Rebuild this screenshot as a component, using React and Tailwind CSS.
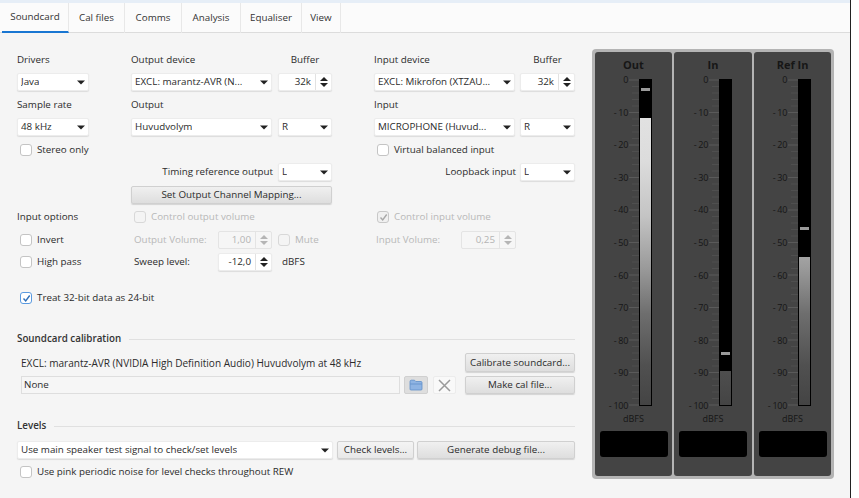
import React from "react";

const COLS = "grid grid-cols-[114px_147px_96px_146px_55px] h-[18px] items-center";

function Caret() {
  return (
    <svg width="8" height="5" viewBox="0 0 8 5" className="shrink-0">
      <path d="M0 0.5H8L4 4.5Z" fill="#222" />
    </svg>
  );
}

function Select({ children, w }) {
  return (
    <div
      className="h-[18px] bg-white rounded-[2px] border border-[#ececec] flex items-center justify-between pl-[3px] pr-[3px] shadow-[0_1px_1px_#dcdcdc]"
      style={{ width: w }}
    >
      <span className="truncate">{children}</span>
      <span className="ml-[2px] flex"><Caret /></span>
    </div>
  );
}

function Spinner({ value, w, disabled }) {
  return (
    <div
      className={`h-[18px] rounded-[2px] border flex items-center ${disabled ? "bg-[#f6f6f6] border-[#e4e4e4] text-[#b4b4b4]" : "bg-white border-[#ececec] shadow-[0_1px_1px_#dcdcdc]"}`}
      style={{ width: w }}
    >
      <span className="flex-1 text-right pr-[4px]">{value}</span>
      <span className={`w-[16px] h-full border-l flex flex-col items-center justify-center gap-[2px] ${disabled ? "border-[#e4e4e4]" : "border-[#e2e2e2]"}`}>
        <svg width="8" height="4" viewBox="0 0 8 4"><path d="M0 4H8L4 0Z" fill={disabled ? "#b5b5b5" : "#222"} /></svg>
        <svg width="8" height="4" viewBox="0 0 8 4"><path d="M0 0H8L4 4Z" fill={disabled ? "#b5b5b5" : "#222"} /></svg>
      </span>
    </div>
  );
}

function Check({ label, checked, disabled, className = "" }) {
  const box = checked
    ? disabled
      ? "border-[#c8c8c8] bg-[#f0f0f0]"
      : "border-[#5a9ae0] bg-white"
    : disabled
      ? "border-[#d8d8d8] bg-[#f4f4f4]"
      : "border-[#c4c4c4] bg-white";
  return (
    <div className={`flex items-center gap-[5px] whitespace-nowrap ${disabled ? "text-[#b8b8b8]" : ""} ${className}`}>
      <span className={`w-[12px] h-[12px] ml-[3px] rounded-[3px] border flex items-center justify-center ${box}`}>
        {checked && (
          <svg width="9" height="9" viewBox="0 0 9 9">
            <path d="M1.5 4.5L3.7 7L7.7 1.5" fill="none" stroke={disabled ? "#a8a8a8" : "#2f6fb8"} strokeWidth="1.4" />
          </svg>
        )}
      </span>
      <span>{label}</span>
    </div>
  );
}

function Btn({ children, className = "" }) {
  return (
    <div className={`h-[18px] rounded-[2px] border border-[#d0d0d0] bg-gradient-to-b from-[#f0f0f0] to-[#dedede] flex items-center justify-center whitespace-nowrap shadow-[0_1px_1px_#d4d4d4] ${className}`}>
      {children}
    </div>
  );
}

function Heading({ children }) {
  return (
    <div className="h-[18px] flex items-center gap-[8px] w-[558px]">
      <span className="font-semibold text-[#333] whitespace-nowrap">{children}</span>
      <span className="flex-1 h-px bg-[#e0e0e0]" />
    </div>
  );
}

const LABELS = ["0", "- 10", "- 20", "- 30", "- 40", "- 50", "- 60", "- 70", "- 80", "- 90", "- 100"];
const FILL = "linear-gradient(#e6e6e6 0%, #dcdcdc 25%, #c4c4c4 42%, #9a9a9a 58%, #6e6e6e 72%, #505050 88%, #444444 100%)";

function Meter({ title, level, peak, offset, className = "" }) {
  const ticks = [];
  for (let i = 0; i <= 50; i++) {
    const y = 6 + i * 6.5;
    ticks.push(
      <line key={i} x1={i % 5 === 0 ? 0 : 3} x2="10" y1={y} y2={y} stroke={i % 5 === 0 ? "#5a5a5a" : "#4f4f4f"} strokeWidth="1" />
    );
  }
  return (
    <div className={`h-full bg-[#444444] rounded-[3px] flex flex-col items-center ${className}`}>
      <div className="h-[22px] flex items-center font-bold text-[11px] text-[#161616] pt-[4px]">{title}</div>
      <div className="flex h-[338px] self-start" style={{ marginLeft: offset }}>
        <div className="w-[33px] flex flex-col justify-between items-end text-[9px] leading-[12px] tracking-[-0.3px] text-[#161616]">
          {LABELS.map((l) => <span key={l} className="h-[12px] whitespace-nowrap">{l}</span>)}
        </div>
        <svg width="10" height="338" viewBox="0 0 10 338" className="ml-[1px]">{ticks}</svg>
        <div className="relative w-[13px] h-[327px] mt-[5px] bg-black border-x border-b border-black flex flex-col justify-end overflow-hidden">
          <div
            className="w-full"
            style={{ height: level, background: FILL, backgroundSize: "100% 326px", backgroundPosition: "bottom", backgroundRepeat: "no-repeat" }}
          />
          <div className="absolute left-[1px] right-[1px] h-[3px] bg-[#9a9a9a]" style={{ top: peak }} />
        </div>
      </div>
      <div className="h-[14px] flex items-center text-[9px] text-[#161616]">dBFS</div>
      <div className="w-[68px] h-[26px] mt-[5px] bg-black rounded-[3px]" />
    </div>
  );
}

export default function App() {
  return (
    <div className="w-[859px] h-[498px] bg-white overflow-hidden text-[#2b2b2b] text-[9.8px] leading-[14px] font-['Open_Sans','Noto_Sans',sans-serif]">
      <div className="w-[851px] h-full bg-[#f5f5f5] border-r border-[#222] flex flex-col">
        <div className="h-[3px] bg-[#e6eef7] shrink-0" />
        <div className="h-[30px] shrink-0 bg-[#fbfbfb] border-b border-[#dcdcdc] flex text-[#333]">
          {[
            ["Soundcard", 67, true],
            ["Cal files", 56],
            ["Comms", 57],
            ["Analysis", 59],
            ["Equaliser", 61],
            ["View", 39],
          ].map(([t, w, a]) => (
            <div
              key={t}
              className={`h-[30px] flex items-center justify-center border-r border-[#e8e8e8] ${a ? "border-b-2 border-b-[#1976d2] ml-[2px]" : ""}`}
              style={{ width: w }}
            >
              {t}
            </div>
          ))}
        </div>
        <div className="flex-1 flex min-h-0">
          <div className="w-[592px] shrink-0 pl-[17px] pt-[18px]">
            <div className={COLS}>
              <span>Drivers</span>
              <span>Output device</span>
              <span className="w-[54px] text-center">Buffer</span>
              <span>Input device</span>
              <span className="text-center">Buffer</span>
            </div>
            <div className={`${COLS} mt-[4px]`}>
              <Select w={72}>Java</Select>
              <Select w={141}>EXCL: marantz-AVR (N...</Select>
              <Spinner value="32k" w={54} />
              <Select w={141}>EXCL: Mikrofon (XTZAU...</Select>
              <Spinner value="32k" w={55} />
            </div>
            <div className={`${COLS} mt-[5px]`}>
              <span>Sample rate</span>
              <span>Output</span>
              <span />
              <span>Input</span>
              <span />
            </div>
            <div className={`${COLS} mt-[4px]`}>
              <Select w={72}>48 kHz</Select>
              <Select w={141}>Huvudvolym</Select>
              <Select w={54}>R</Select>
              <Select w={141}>MICROPHONE (Huvud...</Select>
              <Select w={55}>R</Select>
            </div>
            <div className={`${COLS} mt-[5px]`}>
              <Check label="Stereo only" />
              <span />
              <span />
              <Check label="Virtual balanced input" />
              <span />
            </div>
            <div className={`${COLS} mt-[4px]`}>
              <span />
              <span className="text-right pr-[5px] whitespace-nowrap">Timing reference output</span>
              <Select w={54}>L</Select>
              <span className="text-right pr-[4px] whitespace-nowrap">Loopback input</span>
              <Select w={55}>L</Select>
            </div>
            <div className={`${COLS} mt-[5px]`}>
              <span />
              <Btn className="w-[201px]">Set Output Channel Mapping...</Btn>
            </div>
            <div className={`${COLS} mt-[4px]`}>
              <span>Input options</span>
              <Check label="Control output volume" disabled />
              <span />
              <Check label="Control input volume" checked disabled />
            </div>
            <div className={`${COLS} mt-[5px]`}>
              <Check label="Invert" />
              <div className="flex items-center text-[#b8b8b8] w-[190px]">
                <span className="w-[87px] pl-[3px]">Output Volume:</span>
                <Spinner value="1,00" w={54} disabled />
                <Check label="Mute" disabled className="ml-[3px]" />
              </div>
              <span />
              <div className="flex items-center text-[#b8b8b8]">
                <span className="w-[87px] pl-[2px]">Input Volume:</span>
                <Spinner value="0,25" w={55} disabled />
              </div>
            </div>
            <div className={`${COLS} mt-[4px]`}>
              <Check label="High pass" />
              <div className="flex items-center w-[190px]">
                <span className="w-[87px] pl-[3px]">Sweep level:</span>
                <Spinner value="-12,0" w={54} />
                <span className="ml-[10px]">dBFS</span>
              </div>
            </div>
            <div className={`${COLS} mt-[18px]`}>
              <Check label="Treat 32-bit data as 24-bit" checked className="w-[300px]" />
            </div>

            <div className="mt-[23px]"><Heading>Soundcard calibration</Heading></div>
            <div className="mt-[5px] flex items-center h-[19px] w-[558px] justify-between">
              <span className="pl-[4px] text-[10.05px]">EXCL: marantz-AVR (NVIDIA High Definition Audio) Huvudvolym at 48 kHz</span>
              <Btn className="w-[110px] h-[19px]">Calibrate soundcard...</Btn>
            </div>
            <div className="mt-[4px] flex items-center h-[18px] w-[558px]">
              <div className="w-[379px] ml-[4px] h-[18px] bg-[#f6f6f6] border border-[#dedede] flex items-center pl-[2px]">None</div>
              <div className="ml-[4px] w-[24px] h-[18px] rounded-[2px] bg-[#dedede] border border-[#d0d0d0] flex items-center justify-center">
                <svg width="14" height="12" viewBox="0 0 14 12">
                  <path d="M1 2.5C1 1.7 1.5 1.2 2.2 1.2H5.5L6.8 2.5H12C12.6 2.5 13 3 13 3.5V10.2C13 10.8 12.6 11 12 11H2C1.4 11 1 10.8 1 10.2Z" fill="#8fb4e3" stroke="#5f8fc9" strokeWidth="0.8" />
                  <path d="M1.2 5H12.8" stroke="#5f8fc9" strokeWidth="0.8" />
                </svg>
              </div>
              <div className="ml-[5px] w-[23px] h-[18px] rounded-[2px] bg-[#f9f9f9] border border-[#ececec] flex items-center justify-center">
                <svg width="13" height="13" viewBox="0 0 13 13">
                  <path d="M1 1L12 12M12 1L1 12" stroke="#9a9a9a" strokeWidth="1.5" />
                </svg>
              </div>
              <Btn className="w-[110px] ml-[9px]">Make cal file...</Btn>
            </div>

            <div className="mt-[23px]"><Heading>Levels</Heading></div>
            <div className="mt-[6px] flex items-center h-[18px] w-[558px]">
              <Select w={316}>Use main speaker test signal to check/set levels</Select>
              <Btn className="w-[77px] ml-[4px] border-[#8db8e2] from-[#f4f4f4] to-[#e8e8e8]">Check levels...</Btn>
              <Btn className="w-[158px] ml-[3px]">Generate debug file...</Btn>
            </div>
            <div className="mt-[4px] flex items-center h-[18px]">
              <Check label="Use pink periodic noise for level checks throughout REW" />
            </div>
          </div>

          <div className="w-[242px] h-[430px] mt-[16px] bg-[#b4b4b4] rounded-[4px] p-[3px] flex justify-between">
            <Meter title="Out" level={287} peak={9} offset={0} className="w-[77px]" />
            <Meter title="In" level={34} peak={273} offset={1} className="w-[78px]" />
            <Meter title="Ref In" level={148} peak={148} offset={0} className="w-[77px]" />
          </div>
        </div>
      </div>
    </div>
  );
}
